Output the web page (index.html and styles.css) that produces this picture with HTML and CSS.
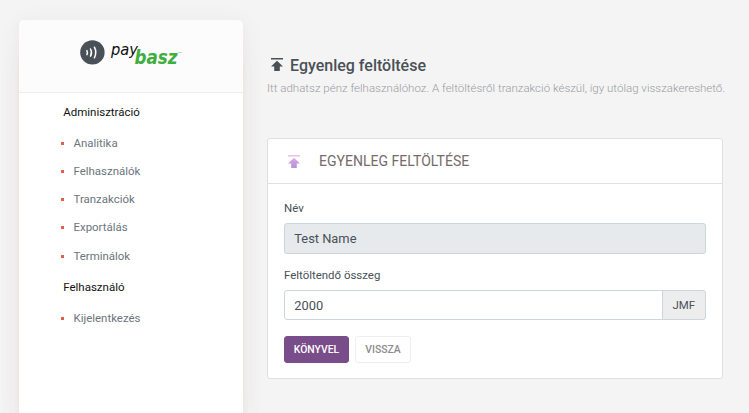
FILE: index.html
```html
<!DOCTYPE html>
<html lang="hu">
<head>
<meta charset="utf-8">
<title>Egyenleg feltöltése</title>
<link rel="stylesheet" href="styles.css">
</head>
<body>
<div class="layout">
  <aside class="sidebar">
    <div class="brand">
      <svg class="logo" width="106" height="30" viewBox="0 0 106 30">
        <circle cx="12.4" cy="14.4" r="12.2" fill="#495057"/>
        <g fill="none" stroke="#fff" stroke-width="1.5" stroke-linecap="round">
          <path d="M6.9 12.6q1 2 0 4"/>
          <path d="M10.5 11q2 3.5 0 7.2"/>
          <path d="M14.4 9.2q2.8 5.3 0 10.6"/>
        </g>
        <text class="logo-pay" x="31" y="17" textLength="27" lengthAdjust="spacingAndGlyphs">pay</text>
        <text class="logo-basz" x="54.5" y="26.4" textLength="43" lengthAdjust="spacingAndGlyphs">basz</text>
        <path d="M98 14.5h4" stroke="#b9dfb9" stroke-width="1"/>
      </svg>
    </div>
    <nav class="menu">
      <h2 class="menu-title">Adminisztráció</h2>
      <ul class="menu-list">
        <li>Analitika</li>
        <li>Felhasználók</li>
        <li>Tranzakciók</li>
        <li>Exportálás</li>
        <li>Terminálok</li>
      </ul>
      <h2 class="menu-title">Felhasználó</h2>
      <ul class="menu-list">
        <li>Kijelentkezés</li>
      </ul>
    </nav>
  </aside>
  <main class="content">
    <h1 class="page-title">
      <svg class="upload" width="12" height="14" viewBox="0 0 12 14" fill="#495057"><path d="M0 0h12v1.4H0zM6 2.8l6 5.8H8.8V13H3.2V8.6H0z"/></svg>
      <span>Egyenleg feltöltése</span>
    </h1>
    <p class="lead">Itt adhatsz pénz felhasználóhoz. A feltöltésről tranzakció készül, így utólag visszakereshető.</p>
    <section class="card">
      <header class="card-header">
        <svg class="header-icon" width="12" height="14" viewBox="0 0 12 14">
          <defs><linearGradient id="lilac" gradientUnits="userSpaceOnUse" x1="0" y1="0" x2="0" y2="13"><stop offset="0" stop-color="#f3c3e5"/><stop offset=".5" stop-color="#c9a0dc"/><stop offset="1" stop-color="#b594da"/></linearGradient></defs>
          <path fill="url(#lilac)" d="M0 0h12v1.4H0zM6 2.8l6 5.8H8.8V13H3.2V8.6H0z"/>
        </svg>
        <span>EGYENLEG FELTÖLTÉSE</span>
      </header>
      <form class="card-body">
        <label for="name">Név</label>
        <input class="field disabled" id="name" type="text" value="Test Name" readonly>
        <label for="amount">Feltöltendő összeg</label>
        <div class="group">
          <input class="field" id="amount" type="text" value="2000">
          <span class="addon">JMF</span>
        </div>
        <div class="actions">
          <button class="btn primary" type="button">KÖNYVEL</button>
          <button class="btn outline" type="button">VISSZA</button>
        </div>
      </form>
    </section>
  </main>
</div>
</body>
</html>
```
FILE: styles.css
```css
* { box-sizing: border-box; }
html, body { height: 100%; }
body {
  margin: 0;
  overflow: hidden;
  background: #f4f4f4;
  color: #495057;
  font-family: Roboto, "Liberation Sans", sans-serif;
  font-size: 11.44px;
  line-height: 17px;
}
.layout { display: flex; height: 413px; padding: 20px 26px 0 19px; gap: 24px; }
.sidebar {
  flex: 0 0 224px;
  height: 393px;
  background: #fff;
  border-radius: 5px 5px 0 0;
  box-shadow: 0 30px 30px rgba(110, 60, 50, .03), 0 3px 26px rgba(110, 60, 50, .05), 0 2px 6px rgba(90, 60, 55, .05);
}
.brand {
  height: 73px;
  padding: 18px 0 0 61px;
  background: #fcfcfc;
  border-bottom: 1px solid #efefef;
  border-radius: 5px 5px 0 0;
}
.logo { display: block; overflow: visible; }
.logo-pay { font: italic 16px "DejaVu Sans", sans-serif; fill: #111; }
.logo-basz { font: italic bold 19.5px "DejaVu Sans", sans-serif; fill: #3fae3f; }
.menu { padding: 11px 0 0 42px; }
.menu-title { margin: 0 0 0 2.2px; color: #111; font-size: 11.5px; font-weight: 400; line-height: 17px; }
.menu-list { margin: 8px 0 9px; padding: 0; list-style: none; }
.menu-list li { display: flex; align-items: center; height: 28.2px; gap: 9.5px; color: #6c757d; }
.menu-list li::before { content: ""; width: 3px; height: 3px; background: #e05f48; }
.menu-list li:nth-child(5) { padding-top: 1px; }
.content { flex: 1; min-width: 0; padding-top: 35px; }
.page-title { display: flex; align-items: center; gap: 7px; margin: 0; padding-left: 4px; height: 21px; font-size: 16px; font-weight: 500; }
.upload { margin-top: -1px; }
.lead { margin: 4px 0 0; color: #999c9f; font-size: 11.52px; font-weight: 300; white-space: nowrap; }
.card { width: 456px; height: 241px; margin-top: 41px; background: #fff; border: 1px solid #dee0e3; border-radius: 3px; }
.card-header { display: flex; align-items: center; gap: 19px; height: 45px; padding-left: 20px; border-bottom: 1px solid #dee0e3; color: #776a6a; font-size: 14.05px; }
.header-icon { margin-top: 1px; }
.card-body { padding: 16px; }
label { display: block; height: 17px; margin-bottom: 6px; }
.field {
  display: block;
  width: 100%;
  height: 31px;
  margin: 0 0 13px;
  padding: 0 9.3px;
  background: #fff;
  border: 1px solid #ced4da;
  border-radius: 3px;
  outline: 0;
  color: #495057;
  font: 12.87px Roboto, sans-serif;
}
.disabled { background: #e6eaed; }
.group { display: flex; height: 30px; }
.group .field { height: 30px; border-radius: 3px 0 0 3px; }
.addon { flex: 0 0 44px; margin-left: -1px; padding-left: 9.5px; background: #ededed; border: 1px solid #ced4da; border-radius: 0 3px 3px 0; line-height: 28px; }
.actions { display: flex; gap: 6px; margin-top: 16px; }
.btn { height: 27px; padding: 0; border: 1px solid; border-radius: 3px; font: 500 10.4px Roboto, sans-serif; }
.primary { width: 65px; background: #794c8a; border-color: #794c8a; color: #fff; }
.outline { width: 56px; background: #fff; border-color: #eee; color: #8c8c8c; }
```
